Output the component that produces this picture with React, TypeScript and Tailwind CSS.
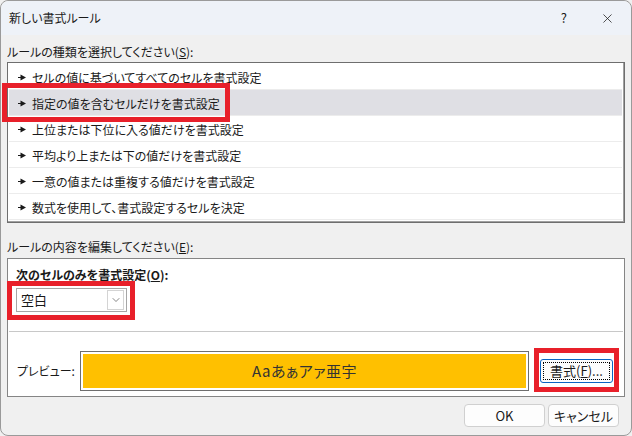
import { ChevronDown, X } from "lucide-react";

const rules = [
	"セルの値に基づいてすべてのセルを書式設定",
	"指定の値を含むセルだけを書式設定",
	"上位または下位に入る値だけを書式設定",
	"平均より上または下の値だけを書式設定",
	"一意の値または重複する値だけを書式設定",
	"数式を使用して、書式設定するセルを決定",
];

const Arrow = () => (
	<svg width="8" height="7" viewBox="0 0 8 7" className="shrink-0">
		<path d="M0 3h2.5V0.5L8 3.5 2.5 6.5V4H0z" fill="#1a1a1a" />
	</svg>
);

const App = () => {
	const selected = 1;

	return (
		<div className="relative h-[436px] w-[632px] overflow-hidden bg-[#f0f0f0] font-['Noto_Sans_CJK_JP',sans-serif] text-[12px] text-[#1a1a1a] [font-feature-settings:'palt']">
			<div className="flex h-full flex-col rounded-lg border border-[#9a9a9a]">
				{/* title bar */}
				<div className="flex h-[34px] shrink-0 items-center rounded-t-lg bg-[#eef2f8] pl-[8px]">
					<span className="flex-1">新しい書式ルール</span>
					<span className="mr-[33px] text-[13px]">?</span>
					<X size={15} strokeWidth={1.2} className="mr-[16px]" />
				</div>

				<div className="flex flex-1 flex-col px-[6px]">
					<div className="mt-[8px] h-[18px] leading-[18px]">
						ルールの種類を選択してください(<span className="underline">S</span>):
					</div>

					<div className="mt-px h-[161px] border border-[#6e6e6e] bg-white p-px pr-[2px] shadow-[inset_-1px_-1px_0_#a0a0a0]">
						{rules.map((rule, i) => (
							<div
								key={rule}
								className={`flex h-[26px] items-center gap-[6px] border-b border-[#ececec] pl-[9px] pt-[2px] ${
									i === selected ? "bg-[#dfdfe4]" : ""
								}`}
							>
								<Arrow />
								<span>{rule}</span>
							</div>
						))}
					</div>

					<div className="mt-[15px] h-[18px] leading-[18px]">
						ルールの内容を編集してください(<span className="underline">E</span>):
					</div>

					<div className="mt-[2px] flex h-[139px] flex-col border border-[#858585] bg-white">
						<div className="px-[8px] pt-[7px]">
							<div className="h-[18px] font-bold leading-[18px]">
								次のセルのみを書式設定(<span className="underline">O</span>):
							</div>
							<div className="mt-[4px] flex h-[24px] w-[111px] items-center justify-between border border-[#a6a6a6] bg-white pl-[4px] pr-[2px]">
								<span className="text-[13px]">空白</span>
								<div className="flex h-[20px] w-[17px] items-center justify-center border border-[#d4d4d4]">
									<ChevronDown size={12} strokeWidth={1.3} color="#444" />
								</div>
							</div>
						</div>
						<div className="mx-px mt-[19px] h-px bg-[#c8c8c8]" />
						<div className="mt-[19px] flex items-center pl-[9px]">
							<span className="w-[63px]">プレビュー:</span>
							<div className="flex h-[40px] w-[449px] border border-[#6e6e6e] bg-white p-[2px]">
								<div className="flex flex-1 items-center justify-center bg-[#ffc000] text-[15px] tracking-[0.5px] text-[#333]">
									Aaあぁアァ亜宇
								</div>
							</div>
							<button
								type="button"
								className="ml-[11px] flex h-[24px] w-[73px] items-center justify-center rounded-[3px] border border-[#0a64c2] bg-[#fdfdfd] p-[2px] text-[13px]"
							>
								<span className="flex h-full w-full items-center justify-center border border-dotted border-black">
									書式(<span className="underline">F</span>)...
								</span>
							</button>
						</div>
					</div>

					<div className="mt-[7px] flex justify-end gap-[3px] pr-[6px] text-[13px]">
						<button
							type="button"
							className="h-[23px] w-[81px] rounded-[4px] border border-[#d0d0d0] bg-[#fdfdfd]"
						>
							OK
						</button>
						<button
							type="button"
							className="h-[23px] w-[71px] rounded-[4px] border border-[#d0d0d0] bg-[#fdfdfd]"
						>
							キャンセル
						</button>
					</div>
				</div>
			</div>

			{/* red annotation frames */}
			<div className="pointer-events-none absolute left-[2px] top-[83px] h-[39px] w-[228px] border-[5px] border-[#e8202a]" />
			<div className="pointer-events-none absolute left-[7px] top-[281px] h-[39px] w-[128px] border-[5px] border-[#e8202a]" />
			<div className="pointer-events-none absolute left-[534px] top-[348px] h-[44px] w-[85px] border-[5px] border-[#e8202a]" />
		</div>
	);
};

export default App;
